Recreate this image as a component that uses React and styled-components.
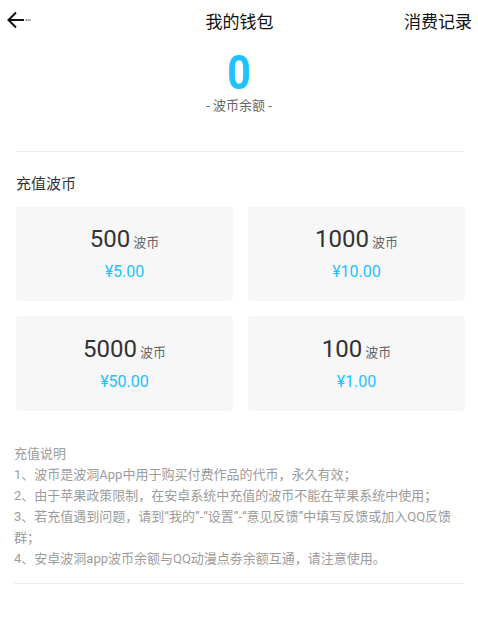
import React from "react";
import styled, { createGlobalStyle } from "styled-components";

const GlobalStyle = createGlobalStyle`
    body {
        margin: 0;
        background: #fff;
        font-family: Roboto, "Noto Sans CJK SC", sans-serif;
    }
`;

const Page = styled.div`
    width: 478px;
    min-height: 634px;
    background: #fff;
`;

const Header = styled.div`
    height: 40px;
    display: grid;
    grid-template-columns: 1fr auto 1fr;
    align-items: center;
    padding: 0 6px 0 7px;
`;

const Back = styled.div`
    display: flex;
    align-items: center;
`;

const Title = styled.span`
    font-size: 17px;
    color: #111;
`;

const Records = styled.span`
    justify-self: end;
    font-size: 17px;
    color: #111;
`;

const Balance = styled.div`
    display: flex;
    flex-direction: column;
    align-items: center;
    margin-top: 9px;
`;

const Amount = styled.span`
    display: inline-block;
    font-size: 48px;
    line-height: 48px;
    font-weight: 700;
    color: #1ec2fe;
    transform: scaleX(0.86);
`;

const AmountLabel = styled.span`
    font-size: 13px;
    line-height: 18px;
    color: #666;
`;

const Divider = styled.div`
    height: 1px;
    background: #ececec;
    margin: ${(p) => p.$top}px 14px 0 ${(p) => p.$left}px;
`;

const Section = styled.div`
    padding: 0 13px 0 16px;
`;

const SectionTitle = styled.div`
    margin-top: 22px;
    font-size: 15px;
    line-height: 20px;
    color: #333;
`;

const Grid = styled.div`
    margin-top: 12px;
    display: grid;
    grid-template-columns: 1fr 1fr;
    gap: 15px;
`;

const Card = styled.div`
    height: 95px;
    background: #f7f7f7;
    border-radius: 4px;
    display: flex;
    flex-direction: column;
    align-items: center;
    justify-content: center;
    gap: 5px;
`;

const Coins = styled.div`
    display: flex;
    align-items: baseline;
    line-height: 28px;
`;

const CoinNum = styled.span`
    font-size: 24px;
    color: #333;
`;

const CoinUnit = styled.span`
    font-size: 13px;
    color: #666;
    margin-left: 3px;
`;

const Price = styled.span`
    font-size: 16px;
    line-height: 20px;
    color: #1ec2fe;
`;

const Notes = styled.div`
    margin-top: 32px;
    padding: 0 14px 0 14px;
    font-size: 13px;
    line-height: 21px;
    color: #9c9c9c;
`;

const packages = [
    { coins: 500, price: "¥5.00" },
    { coins: 1000, price: "¥10.00" },
    { coins: 5000, price: "¥50.00" },
    { coins: 100, price: "¥1.00" },
];

const notes = [
    "充值说明",
    "1、波币是波洞App中用于购买付费作品的代币，永久有效；",
    "2、由于苹果政策限制，在安卓系统中充值的波币不能在苹果系统中使用；",
    "3、若充值遇到问题，请到“我的”-“设置”-“意见反馈”中填写反馈或加入QQ反馈群；",
    "4、安卓波洞app波币余额与QQ动漫点劵余额互通，请注意使用。",
];

function BackIcon() {
    return (
        <svg width="26" height="22" viewBox="0 0 26 22">
            <path d="M1.5 11 H17 M9 3.5 L1.5 11 L9 18.5" fill="none" stroke="#111" strokeWidth="2" />
            <rect x="18.5" y="10.5" width="1.2" height="1.2" fill="#333" />
            <rect x="20.5" y="10.5" width="1.2" height="1.2" fill="#333" />
            <rect x="22.5" y="10.5" width="1.2" height="1.2" fill="#333" />
        </svg>
    );
}

export default function App() {
    return (
        <Page>
            <GlobalStyle />
            <Header>
                <Back>
                    <BackIcon />
                </Back>
                <Title>我的钱包</Title>
                <Records>消费记录</Records>
            </Header>
            <Balance>
                <Amount>0</Amount>
                <AmountLabel>- 波币余额 -</AmountLabel>
            </Balance>
            <Divider $top={36} $left={16} />
            <Section>
                <SectionTitle>充值波币</SectionTitle>
                <Grid>
                    {packages.map((p) => (
                        <Card key={p.coins}>
                            <Coins>
                                <CoinNum>{p.coins}</CoinNum>
                                <CoinUnit>波币</CoinUnit>
                            </Coins>
                            <Price>{p.price}</Price>
                        </Card>
                    ))}
                </Grid>
            </Section>
            <Notes>
                {notes.map((n) => (
                    <div key={n}>{n}</div>
                ))}
            </Notes>
            <Divider $top={14} $left={14} />
        </Page>
    );
}
